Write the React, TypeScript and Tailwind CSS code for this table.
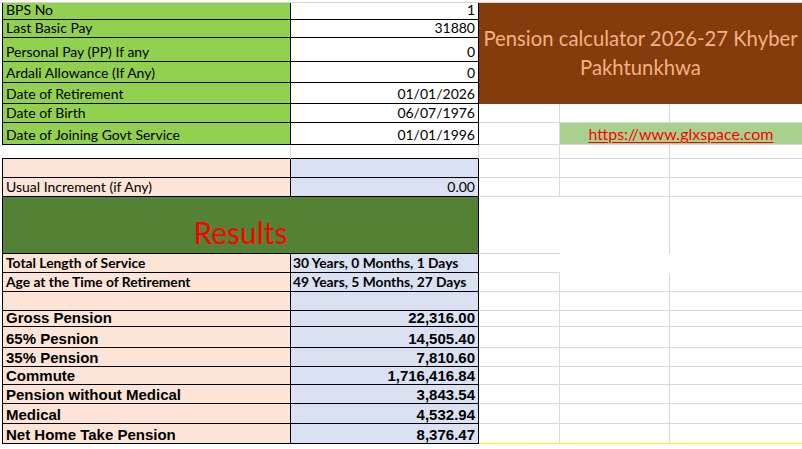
import React from "react";

const gl =
  "flex items-end pl-[3px] pb-[2px] bg-[#92d050] border-l border-r border-b border-black text-[14px] leading-none text-black whitespace-nowrap";
const wv =
  "flex items-end justify-end pr-[3px] pb-[2px] bg-white border-r border-b border-black text-[14px] leading-none text-black whitespace-nowrap";
const gCD = "border-r border-b border-[#d9d9d9]";
const gE = "border-b border-[#d9d9d9]";
const peach =
  "flex items-end pl-[3px] pb-[2px] bg-[#fce4d6] border-l border-r border-b border-black text-[14px] leading-none text-black whitespace-nowrap";
const blue =
  "flex items-end justify-end pr-[3px] pb-[2px] bg-[#d9e1f2] border-r border-b border-black text-[14px] leading-none text-black whitespace-nowrap";
const peachB =
  "flex items-end pl-[3px] pb-[2px] bg-[#fce4d6] border-l border-r border-b border-black text-[13.8px] leading-none font-bold text-black whitespace-nowrap";
const blueB =
  "flex items-end pl-[2px] pb-[2px] bg-[#d9e1f2] border-r border-b border-black text-[13.8px] leading-none font-bold text-black whitespace-nowrap";
const peachA =
  "flex items-end pl-[3px] pb-[1px] bg-[#fce4d6] border-l border-r border-b border-black text-[15px] leading-none font-bold text-black whitespace-nowrap font-[family-name:'Liberation_Sans',Arial,sans-serif]";
const blueA =
  "flex items-end justify-end pr-[3px] pb-[1px] bg-[#d9e1f2] border-r border-b border-black text-[15px] leading-none font-bold text-black whitespace-nowrap font-[family-name:'Liberation_Sans',Arial,sans-serif]";

function GridRight() {
  return (
    <>
      <div className={gCD} />
      <div className={gCD} />
      <div className={gE} />
    </>
  );
}

const topRows: [string, string][] = [
  ["BPS No", "1"],
  ["Last Basic Pay", "31880"],
  ["Personal Pay (PP) If any", "0"],
  ["Ardali Allowance (If Any)", "0"],
  ["Date of Retirement", "01/01/2026"],
];

const lowRows: [string, string][] = [
  ["Gross Pension", "22,316.00"],
  ["65% Pesnion", "14,505.40"],
  ["35% Pension", "7,810.60"],
  ["Commute", "1,716,416.84"],
  ["Pension without Medical", "3,843.54"],
  ["Medical", "4,532.94"],
  ["Net Home Take Pension", "8,376.47"],
];

export default function App() {
  return (
    <div className="w-[802px] h-[449px] bg-white overflow-hidden font-[family-name:Lato,sans-serif]">
      <div className="mt-[2px] border-t border-[#d4d4d4]">
        <div className="ml-[2px] grid grid-cols-[289px_188px_81px_110px_132px] grid-rows-[17px_18px_24px_21px_21px_19px_22px_14px_19px_19px_57px_19px_19px_19px_16px_21px_19px_18px_19px_20px_20px]">
          {/* Row 1 */}
          <div className={gl}>{topRows[0][0]}</div>
          <div className={wv}>{topRows[0][1]}</div>
          <div className="col-span-3 row-span-5 bg-[#843c0c] flex items-center justify-center text-center text-[20.3px] leading-[29px] text-[#f4b183] whitespace-nowrap">
            <div className="-mt-[2px]">
              Pension calculator 2026-27 Khyber
              <br />
              Pakhtunkhwa
            </div>
          </div>
          {topRows.slice(1).map(([l, v]) => (
            <React.Fragment key={l}>
              <div className={gl}>{l}</div>
              <div className={wv}>{v}</div>
            </React.Fragment>
          ))}
          {/* Row 6 */}
          <div className={gl}>Date of Birth</div>
          <div className={wv}>06/07/1976</div>
          <GridRight />
          {/* Row 7 */}
          <div className={gl}>Date of Joining Govt Service</div>
          <div className={wv}>01/01/1996</div>
          <div className={gCD} />
          <div className="col-span-2 bg-[#a9d08e] border-b border-[#d9d9d9] flex items-end justify-center pb-[2px] text-[16px] leading-none text-[#ff0000] underline decoration-1 underline-offset-[2px] whitespace-nowrap">
            https://www.glxspace.com
          </div>
          {/* Row 8 */}
          <div className="border-r border-r-[#d9d9d9] border-b border-b-black" />
          <div className="border-r border-r-[#d9d9d9] border-b border-b-black" />
          <GridRight />
          {/* Row 9 */}
          <div className={peach} />
          <div className={blue} />
          <GridRight />
          {/* Row 10 */}
          <div className={peach}>Usual Increment (if Any)</div>
          <div className={blue}>0.00</div>
          <GridRight />
          {/* Row 11 */}
          <div className="col-span-2 bg-[#548235] border-l border-r border-b border-black flex items-end justify-center pb-[6px] text-[30px] leading-none text-[#ff0000]">
            Results
          </div>
          <div className="border-b border-[#d9d9d9]" />
          <div className="border-r border-[#d9d9d9]" />
          <div />
          {/* Row 12 */}
          <div className={peachB}>Total Length of Service</div>
          <div className={blueB}>30 Years, 0 Months, 1 Days</div>
          <div className="border-b border-[#d9d9d9]" />
          <div />
          <div />
          {/* Row 13 */}
          <div className={peachB}>Age at the Time of Retirement</div>
          <div className={blueB}>49 Years, 5 Months, 27 Days</div>
          <GridRight />
          {/* Row 14 */}
          <div className={peach} />
          <div className={blue} />
          <GridRight />
          {/* Rows 15-21 */}
          {lowRows.map(([l, v], i) => (
            <React.Fragment key={l}>
              <div className={peachA}>{l}</div>
              <div className={blueA}>{v}</div>
              {i < lowRows.length - 1 ? (
                <GridRight />
              ) : (
                <>
                  <div className="border-r border-r-[#d9d9d9] border-b border-b-[#ffff00]" />
                  <div className="border-r border-r-[#d9d9d9] border-b border-b-[#ffff00]" />
                  <div className="border-b border-[#ffff00]" />
                </>
              )}
            </React.Fragment>
          ))}
        </div>
      </div>
    </div>
  );
}
